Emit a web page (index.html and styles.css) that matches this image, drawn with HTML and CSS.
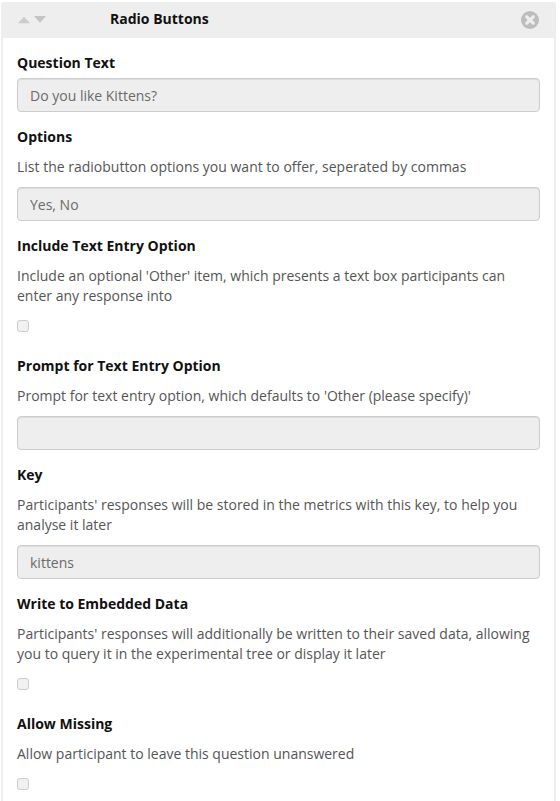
FILE: index.html
```html
<!DOCTYPE html>
<html lang="en">
<head>
    <meta charset="UTF-8">
    <title>Radio Buttons</title>
    <link rel="stylesheet" href="styles.css">
</head>
<body>

<div class="panel">
    <div class="panel_head">
        <div class="arrows">
            <svg class="arrows_icon" width="30" height="10" viewBox="0 0 30 10">
                <path d="M1 9.3 L7 2.7 L13 9.3 Z" fill="#cccccc"/>
                <path d="M17 2 L29 2 L23 8.7 Z" fill="#c4c4c4"/>
            </svg>
        </div>
        <div class="panel_title">Radio Buttons</div>
        <svg class="close_icon" width="18" height="18" viewBox="0 0 18 18">
            <circle cx="9" cy="9" r="9" fill="#bdbdbd"/>
            <path d="M5.8 5.8 L12.2 12.2 M12.2 5.8 L5.8 12.2" stroke="#eeeeee" stroke-width="3.2" stroke-linecap="round"/>
        </svg>
    </div>

    <div class="panel_body">
        <div class="form_group">
            <label>Question Text</label>
            <input class="form_input" type="text" value="Do you like Kittens?" disabled>
        </div>

        <div class="form_group">
            <label>Options</label>
            <p class="help">List the radiobutton options you want to offer, seperated by commas</p>
            <input class="form_input" type="text" value="Yes, No" disabled>
        </div>

        <div class="form_group">
            <label>Include Text Entry Option</label>
            <p class="help">Include an optional 'Other' item, which presents a text box participants can enter any response into</p>
            <div class="check_row"><input class="check" type="checkbox" disabled></div>
        </div>

        <div class="form_group">
            <label>Prompt for Text Entry Option</label>
            <p class="help">Prompt for text entry option, which defaults to 'Other (please specify)'</p>
            <input class="form_input" type="text" disabled>
        </div>

        <div class="form_group">
            <label>Key</label>
            <p class="help">Participants' responses will be stored in the metrics with this key, to help you analyse it later</p>
            <input class="form_input" type="text" value="kittens" disabled>
        </div>

        <div class="form_group">
            <label>Write to Embedded Data</label>
            <p class="help">Participants' responses will additionally be written to their saved data, allowing you to query it in the experimental tree or display it later</p>
            <div class="check_row"><input class="check" type="checkbox" disabled></div>
        </div>

        <div class="form_group">
            <label>Allow Missing</label>
            <p class="help">Allow participant to leave this question unanswered</p>
            <div class="check_row"><input class="check" type="checkbox" disabled></div>
        </div>
    </div>
</div>

</body>
</html>
```

FILE: styles.css
```css
* {
    margin: 0px;
    padding: 0px;
    box-sizing: border-box;
}

html, body {
    height: 100%;
    overflow: hidden;
}

body {
    background-color: white;
    font-family: "Open Sans", "Liberation Sans", sans-serif;
    font-size: 14px;
    line-height: 20px;
    color: #333333;
    padding: 2px 0px 0px 1px;
}

.panel {
    width: 555px;
    height: 820px;
    border: 2px solid #EEEEEE;
    border-top: none;
    border-radius: 3px 3px 0px 0px;
}

.panel_head {
    display: flex;
    align-items: center;
    height: 36px;
    background-color: #EEEEEE;
    margin: 0px -2px 0px -2px;
    padding: 0px 17px 2px 16px;
    border-radius: 3px 3px 0px 0px;
}

.arrows {
    width: 93px;
}

.arrows_icon {
    display: block;
}

.close_icon {
    margin-top: 1px;
}

.panel_title {
    flex: 1;
    font-weight: 700;
    color: #111111;
}

.panel_body {
    padding: 15px 14px 0px 14px;
}

.form_group {
    margin-bottom: 15px;
}

label {
    display: block;
    font-weight: 700;
    color: #111111;
    margin-bottom: 5px;
}

.help {
    color: #555555;
    margin: 10px 0px 10px 0px;
}

.form_input {
    display: block;
    width: 100%;
    height: 34px;
    padding: 6px 12px;
    border: 1px solid #CCCCCC;
    border-radius: 4px;
    background-color: #EEEEEE;
    font-family: inherit;
    font-size: 14px;
    color: #6A6A6A;
    box-shadow: inset 0 1px 1px rgba(0, 0, 0, .075);
}

.check_row {
    height: 25px;
    padding-top: 4px;
}

.check {
    display: block;
    width: 12px;
    height: 12px;
    appearance: none;
    border: 1px solid #CDCDCD;
    border-radius: 3px;
    background-color: #F1F1F1;
}
```
